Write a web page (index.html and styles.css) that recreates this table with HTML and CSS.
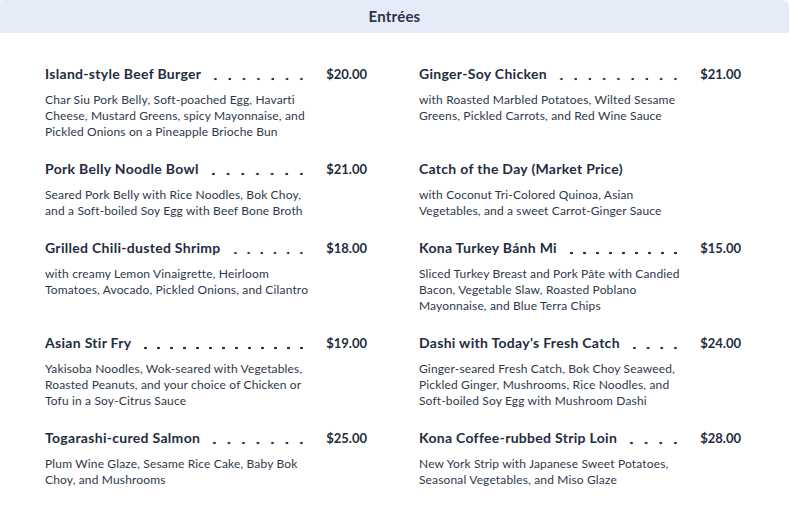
FILE: index.html
```html
<!DOCTYPE html>
<html lang="en">
<head>
<meta charset="utf-8">
<title>Entrées</title>
<link rel="stylesheet" href="styles.css">
</head>
<body>
<section class="menu">
  <h2 class="menu-header">Entrées</h2>
  <div class="menu-grid">
    <article class="item">
      <div class="item-head"><h3 class="item-name">Island-style Beef Burger</h3><span class="leader"></span><span class="price">$20.00</span></div>
      <p class="item-desc">Char Siu Pork Belly, Soft-poached Egg, Havarti<br>Cheese, Mustard Greens, spicy Mayonnaise, and<br>Pickled Onions on a Pineapple Brioche Bun</p>
    </article>
    <article class="item">
      <div class="item-head"><h3 class="item-name">Ginger-Soy Chicken</h3><span class="leader"></span><span class="price">$21.00</span></div>
      <p class="item-desc">with Roasted Marbled Potatoes, Wilted Sesame<br>Greens, Pickled Carrots, and Red Wine Sauce</p>
    </article>
    <article class="item">
      <div class="item-head"><h3 class="item-name">Pork Belly Noodle Bowl</h3><span class="leader"></span><span class="price">$21.00</span></div>
      <p class="item-desc">Seared Pork Belly with Rice Noodles, Bok Choy,<br>and a Soft-boiled Soy Egg with Beef Bone Broth</p>
    </article>
    <article class="item">
      <div class="item-head"><h3 class="item-name">Catch of the Day (Market Price)</h3></div>
      <p class="item-desc">with Coconut Tri-Colored Quinoa, Asian<br>Vegetables, and a sweet Carrot-Ginger Sauce</p>
    </article>
    <article class="item">
      <div class="item-head"><h3 class="item-name">Grilled Chili-dusted Shrimp</h3><span class="leader"></span><span class="price">$18.00</span></div>
      <p class="item-desc">with creamy Lemon Vinaigrette, Heirloom<br>Tomatoes, Avocado, Pickled Onions, and Cilantro</p>
    </article>
    <article class="item">
      <div class="item-head"><h3 class="item-name">Kona Turkey Bánh Mi</h3><span class="leader"></span><span class="price">$15.00</span></div>
      <p class="item-desc">Sliced Turkey Breast and Pork Pâte with Candied<br>Bacon, Vegetable Slaw, Roasted Poblano<br>Mayonnaise, and Blue Terra Chips</p>
    </article>
    <article class="item">
      <div class="item-head"><h3 class="item-name">Asian Stir Fry</h3><span class="leader"></span><span class="price">$19.00</span></div>
      <p class="item-desc">Yakisoba Noodles, Wok-seared with Vegetables,<br>Roasted Peanuts, and your choice of Chicken or<br>Tofu in a Soy-Citrus Sauce</p>
    </article>
    <article class="item">
      <div class="item-head"><h3 class="item-name">Dashi with Today's Fresh Catch</h3><span class="leader"></span><span class="price">$24.00</span></div>
      <p class="item-desc">Ginger-seared Fresh Catch, Bok Choy Seaweed,<br>Pickled Ginger, Mushrooms, Rice Noodles, and<br>Soft-boiled Soy Egg with Mushroom Dashi</p>
    </article>
    <article class="item">
      <div class="item-head"><h3 class="item-name">Togarashi-cured Salmon</h3><span class="leader"></span><span class="price">$25.00</span></div>
      <p class="item-desc">Plum Wine Glaze, Sesame Rice Cake, Baby Bok<br>Choy, and Mushrooms</p>
    </article>
    <article class="item">
      <div class="item-head"><h3 class="item-name">Kona Coffee-rubbed Strip Loin</h3><span class="leader"></span><span class="price">$28.00</span></div>
      <p class="item-desc">New York Strip with Japanese Sweet Potatoes,<br>Seasonal Vegetables, and Miso Glaze</p>
    </article>
  </div>
</section>
</body>
</html>
```
FILE: styles.css
```css
html, body {
  margin: 0;
  padding: 0;
  background: #ffffff;
}

body {
  font-family: Lato, "Noto Sans", "DejaVu Sans", sans-serif;
  color: #2c3648;
}

.menu {
  width: 789px;
}

.menu-header {
  margin: 0;
  height: 33px;
  line-height: 32px;
  background: #e5ecf8;
  border-radius: 3px 6px 0 0;
  text-align: center;
  font-size: 15px;
  letter-spacing: 0.2px;
  font-weight: 700;
  color: #27344b;
}

.menu-grid {
  display: grid;
  grid-template-columns: 322px 322px;
  column-gap: 52px;
  row-gap: 19px;
  padding: 31px 0 0 45px;
}

.item-head {
  display: flex;
  align-items: flex-start;
  height: 20px;
}

.item-name {
  margin: 0;
  font-size: 14px;
  line-height: 20px;
  letter-spacing: 0.3px;
  font-weight: 700;
  color: #232d40;
  white-space: nowrap;
}

.leader {
  flex: 1;
  height: 20px;
  margin: 0 18px 0 8px;
  background-image: radial-gradient(circle at center, #2c3648 0, #2c3648 1.1px, rgba(44,54,72,0) 1.6px);
  background-size: 13px 4px;
  background-repeat: space no-repeat;
  background-position: right 0 top 13px;
}

.price {
  font-size: 13px;
  line-height: 20px;
  font-weight: 700;
  color: #232d40;
  white-space: nowrap;
}

.item-desc {
  margin: 8px 0 0;
  font-size: 12px;
  line-height: 16px;
  letter-spacing: 0.15px;
  color: #2e384b;
}
```
